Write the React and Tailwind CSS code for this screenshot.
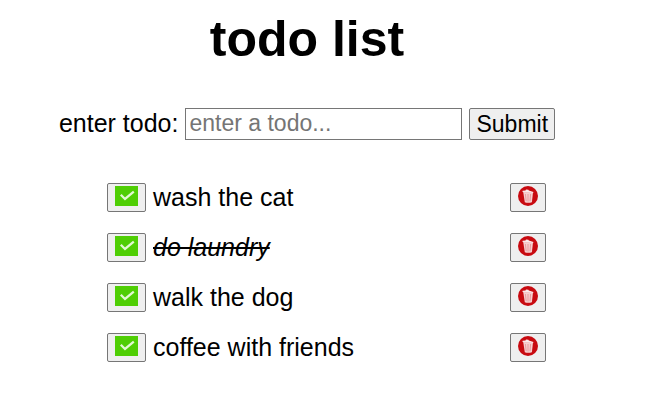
import { useState } from "react";

const initialTodos = [
  { id: 1, text: "wash the cat", done: false },
  { id: 2, text: "do laundry", done: true },
  { id: 3, text: "walk the dog", done: false },
  { id: 4, text: "coffee with friends", done: false },
];

const control = "rounded-[2px] border border-[#767676]";

function CheckIcon() {
  return (
    <svg width="23" height="20" viewBox="0 0 23 20" aria-hidden="true">
      <rect width="23" height="20" fill="#4fce04" />
      <path d="M5.8 8.8 L10 13 L18.8 5.6" fill="none" stroke="#e2f8d2" strokeWidth="2.3" />
    </svg>
  );
}

function TrashIcon() {
  return (
    <svg width="20" height="20" viewBox="0 0 20 20" aria-hidden="true">
      <circle cx="10" cy="10" r="10" fill="#c80a10" />
      <path d="M5.2 6 L15 6.6 L13.9 16.2 Q10 17.4 6.8 16.2 Z" fill="#f6cfcf" />
      <path d="M4.6 4.7 L7.5 4.5 L8 3.6 L10.4 3.8 L10.8 4.6 L15.4 6.1 L15.1 7.1 L4.5 5.9 Z" fill="#fbe9e9" />
      <path d="M7.4 8 L8.2 15.2 M10 8 V15.6 M12.6 8 L12 15.2" stroke="#e08488" strokeWidth="0.7" fill="none" />
    </svg>
  );
}

export default function App() {
  const [todos, setTodos] = useState(initialTodos);
  const [draft, setDraft] = useState("");

  const addTodo = (event) => {
    event.preventDefault();
    if (!draft.trim()) return;
    setTodos([...todos, { id: Date.now(), text: draft, done: false }]);
    setDraft("");
  };
  const toggle = (id) =>
    setTodos(todos.map((t) => (t.id === id ? { ...t, done: !t.done } : t)));
  const remove = (id) => setTodos(todos.filter((t) => t.id !== id));

  return (
    <main className="flex min-h-screen flex-col items-center bg-white pt-[9px] pr-10 font-['Liberation_Sans',Arial,sans-serif] text-[25px] leading-[30px] text-black">
      <h1 className="text-[50px] leading-[60px] font-bold">todo list</h1>
      <form onSubmit={addTodo} className="mt-[39px] flex items-center gap-[7px]">
        <label htmlFor="todo" className="pb-[2px]">enter todo:</label>
        <input
          id="todo"
          value={draft}
          onChange={(event) => setDraft(event.target.value)}
          placeholder="enter a todo..."
          className="h-8 w-[277px] border border-[#767676] bg-white px-[3px] pb-[2px] text-[23px] placeholder:text-[#757575]"
        />
        <button type="submit" className={`${control} h-8 bg-[#efefef] px-[6px] pb-[2px] text-[23px]`}>
          Submit
        </button>
      </form>
      <ul className="mt-[42px] ml-[39px] flex w-full max-w-[439px] flex-col gap-5">
        {todos.map((todo) => (
          <li key={todo.id} className="flex items-center">
            <button
              type="button"
              aria-label={`Complete ${todo.text}`}
              onClick={() => toggle(todo.id)}
              className={`${control} flex h-[29px] items-start bg-[#efefef] px-[7px] pt-[2px]`}
            >
              <CheckIcon />
            </button>
            <span className={todo.done ? "ml-[7px] italic line-through" : "ml-[7px]"}>{todo.text}</span>
            <button
              type="button"
              aria-label={`Delete ${todo.text}`}
              onClick={() => remove(todo.id)}
              className={`${control} ml-auto flex h-[29px] items-start bg-[#efefef] px-[7px] pt-[2px]`}
            >
              <TrashIcon />
            </button>
          </li>
        ))}
      </ul>
    </main>
  );
}
